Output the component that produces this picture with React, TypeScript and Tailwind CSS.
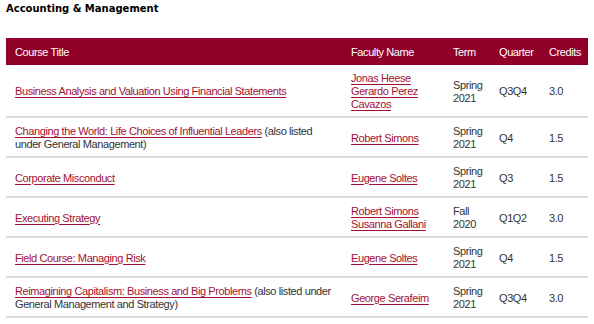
import React from 'react';

type Course = {
  title: string;
  note?: string;
  faculty: string[];
  term: [string, string];
  quarter: string;
  credits: string;
};

const courses: Course[] = [
  { title: 'Business Analysis and Valuation Using Financial Statements', faculty: ['Jonas Heese', 'Gerardo Perez Cavazos'], term: ['Spring', '2021'], quarter: 'Q3Q4', credits: '3.0' },
  { title: 'Changing the World: Life Choices of Influential Leaders', note: ' (also listed under General Management)', faculty: ['Robert Simons'], term: ['Spring', '2021'], quarter: 'Q4', credits: '1.5' },
  { title: 'Corporate Misconduct', faculty: ['Eugene Soltes'], term: ['Spring', '2021'], quarter: 'Q3', credits: '1.5' },
  { title: 'Executing Strategy', faculty: ['Robert Simons', 'Susanna Gallani'], term: ['Fall', '2020'], quarter: 'Q1Q2', credits: '3.0' },
  { title: 'Field Course: Managing Risk', faculty: ['Eugene Soltes'], term: ['Spring', '2021'], quarter: 'Q4', credits: '1.5' },
  { title: 'Reimagining Capitalism: Business and Big Problems', note: ' (also listed under General Management and Strategy)', faculty: ['George Serafeim'], term: ['Spring', '2021'], quarter: 'Q3Q4', credits: '3.0' },
];

const link = 'text-[#a41034] underline underline-offset-2 decoration-1';

const App: React.FC = () => {
  return (
    <div className="w-[594px] h-[324px] bg-white px-[6px] pt-[2px] overflow-hidden font-['Liberation_Sans',Arial,sans-serif] text-[#333] text-[11px] leading-[13px] tracking-[-0.4px]">
      <h2 className="font-['DejaVu_Sans',Verdana,sans-serif] font-bold text-[10px] leading-[13px] tracking-normal text-black">
        Accounting &amp; Management
      </h2>
      <table className="mt-[23px] w-[582px] border-collapse table-fixed">
        <colgroup>
          <col className="w-[336px]" />
          <col className="w-[102px]" />
          <col className="w-[46px]" />
          <col className="w-[50px]" />
          <col className="w-[48px]" />
        </colgroup>
        <thead>
          <tr className="bg-[#900028] text-white h-[27px] text-left">
            <th className="font-normal pl-[9px] pt-[1px]">Course Title</th>
            <th className="font-normal pl-[9px] pt-[1px]">Faculty Name</th>
            <th className="font-normal pl-[9px] pt-[1px]">Term</th>
            <th className="font-normal pl-[9px] pt-[1px]">Quarter</th>
            <th className="font-normal pl-[9px] pt-[1px]">Credits</th>
          </tr>
        </thead>
        <tbody>
          {courses.map((c) => (
            <tr key={c.title} className="border-b-2 border-[#dcdcdc] align-middle">
              <td className="pl-[9px] pr-[8px] pt-[7px] pb-[5px]">
                <a href="#" className={link}>{c.title}</a>
                {c.note}
              </td>
              <td className="pl-[9px] pt-[7px] pb-[5px]">
                {c.faculty.map((f) => (
                  <div key={f}>
                    <a href="#" className={link}>{f}</a>
                  </div>
                ))}
              </td>
              <td className="pl-[9px] pt-[7px] pb-[5px]">
                {c.term[0]}
                <br />
                {c.term[1]}
              </td>
              <td className="pl-[9px] pt-[7px] pb-[5px]">{c.quarter}</td>
              <td className="pl-[9px] pt-[7px] pb-[5px]">{c.credits}</td>
            </tr>
          ))}
        </tbody>
      </table>
    </div>
  );
};

export default App;
